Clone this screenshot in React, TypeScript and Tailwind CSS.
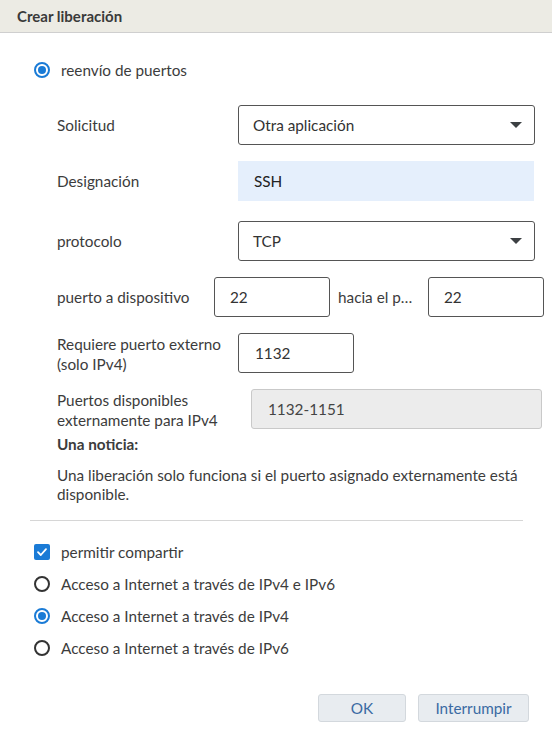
import React from "react";

function Radio({ checked }: { checked?: boolean }) {
  return (
    <span className="w-4 h-4 rounded-full border-2 flex items-center justify-center shrink-0 box-border"
      style={{ borderColor: checked ? "#1a7bd6" : "#333" }}>
      {checked && <span className="w-2 h-2 rounded-full bg-[#1a7bd6]" />}
    </span>
  );
}

function Check() {
  return (
    <span className="w-4 h-4 rounded-[2px] bg-[#1a7bd6] flex items-center justify-center shrink-0">
      <svg width="12" height="12" viewBox="0 0 12 12" fill="none">
        <path d="M2 6.2 L4.8 9 L10 3.2" stroke="white" strokeWidth="1.8" strokeLinecap="round" strokeLinejoin="round" />
      </svg>
    </span>
  );
}

function Caret() {
  return (
    <svg width="12" height="7" viewBox="0 0 12 7">
      <path d="M0 0 H12 L6 6 Z" fill="#3c4043" />
    </svg>
  );
}

export default function App() {
  return (
    <div className="w-[552px] h-[734px] bg-white text-[#3c3c3c] text-[15.3px] leading-5" style={{ fontFamily: "Lato, 'Noto Sans', sans-serif" }}>
      <div className="h-[33px] bg-[#ecebe4] border-b border-[#cfcfcf] flex items-center pl-[17px]">
        <span className="font-bold text-[15px] text-[#3a3a3a]">Crear liberación</span>
      </div>

      <div className="pl-[34px] pt-[27px] flex items-center gap-[11px] h-[20px] box-content">
        <Radio checked />
        <span>reenvío de puertos</span>
      </div>

      <div className="pl-[57px] pt-[25px]">
        <div className="flex items-center h-10">
          <span className="w-[181px]">Solicitud</span>
          <div className="w-[297px] h-10 border border-[#555] rounded-[3px] flex items-center justify-between pl-[14px] pr-[12px] text-[#333]">
            <span>Otra aplicación</span>
            <Caret />
          </div>
        </div>
        <div className="flex items-center h-10 mt-4">
          <span className="w-[181px]">Designación</span>
          <div className="w-[296px] h-10 bg-[#e5effc] flex items-center pl-[16px] text-[#222]">SSH</div>
        </div>
        <div className="flex items-center h-10 mt-5">
          <span className="w-[181px]">protocolo</span>
          <div className="w-[297px] h-10 border border-[#555] rounded-[3px] flex items-center justify-between pl-[14px] pr-[12px] text-[#333]">
            <span>TCP</span>
            <Caret />
          </div>
        </div>
        <div className="flex items-center h-10 mt-4">
          <span className="w-[157px]">puerto a dispositivo</span>
          <div className="w-[116px] h-10 border border-[#555] rounded-[3px] flex items-center pl-[15px] text-[#333]">22</div>
          <span className="w-[98px] pl-[8px] whitespace-nowrap">hacia el p…</span>
          <div className="w-[116px] h-10 border border-[#555] rounded-[3px] flex items-center pl-[15px] text-[#333]">22</div>
        </div>
        <div className="flex items-center h-10 mt-4">
          <span className="w-[181px] leading-[20px] mt-[1px]">Requiere puerto externo<br />(solo IPv4)</span>
          <div className="w-[116px] h-10 border border-[#555] rounded-[3px] flex items-center pl-[16px] text-[#333]">1132</div>
        </div>
        <div className="flex items-center h-10 mt-4">
          <span className="w-[194px] leading-[20px] mt-[1px]">Puertos disponibles<br />externamente para IPv4</span>
          <div className="w-[291px] h-10 bg-[#ececec] border border-[#c9c9c9] rounded-[3px] flex items-center pl-[16px] text-[#444]">1132-1151</div>
        </div>
        <div className="font-bold mt-[5px] h-5">Una noticia:</div>
        <div className="mt-[12px] w-[470px] leading-[19px]">Una liberación solo funciona si el puerto asignado externamente está disponible.</div>
      </div>

      <div className="mx-[30px] w-[493px] border-t border-[#d6d6d6] mt-[16px]" />

      <div className="pl-[34px] pt-[21px] flex flex-col gap-[12px]">
        <div className="flex items-center gap-[11px] h-5"><Check /><span>permitir compartir</span></div>
        <div className="flex items-center gap-[11px] h-5"><Radio /><span>Acceso a Internet a través de IPv4 e IPv6</span></div>
        <div className="flex items-center gap-[11px] h-5"><Radio checked /><span>Acceso a Internet a través de IPv4</span></div>
        <div className="flex items-center gap-[11px] h-5"><Radio /><span>Acceso a Internet a través de IPv6</span></div>
      </div>

      <div className="flex justify-end gap-[12px] pr-[23px] mt-[36px]">
        <button className="w-[88px] h-[28px] bg-[#e8ecf0] border border-[#d3d8dd] rounded-[3px] text-[#3a6aa3]">OK</button>
        <button className="w-[111px] h-[28px] bg-[#e8ecf0] border border-[#d3d8dd] rounded-[3px] text-[#3a6aa3]">Interrumpir</button>
      </div>
    </div>
  );
}
